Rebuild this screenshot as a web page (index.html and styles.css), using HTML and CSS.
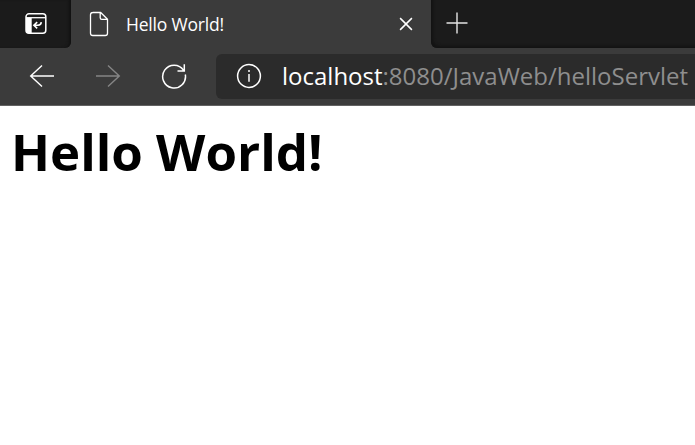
FILE: index.html
```html
<!DOCTYPE html>
<html lang="en">
<head>
<meta charset="utf-8">
<title>Hello World!</title>
<link rel="stylesheet" href="styles.css">
</head>
<body>
<header class="tabs">
  <div class="lead">
    <svg class="panel-icon" width="24" height="24" viewBox="0 0 24 24" fill="none" stroke="#fff" stroke-width="1.5">
      <rect x="2" y="1.8" width="19.8" height="19.5" rx="3"/>
      <path d="M2 5.7H22" stroke-width="1.3"/>
      <path d="M2 6H7.7V21.3H4.5Q2 21.3 2 18Z" fill="#fff" stroke="none"/>
      <path d="M17.3 10.2Q17 13.3 14 13.3H10.2M13.2 10.1L9.9 13.3L13.2 16.4" stroke-width="1.6"/>
    </svg>
  </div>
  <div class="tab">
    <svg width="20" height="26" viewBox="0 0 20 26" fill="none" stroke="#fff" stroke-width="1.3" stroke-linejoin="round">
      <path d="M3.6 1.5H11.7L18.5 8.3V22.2Q18.5 24.5 16.2 24.5H3.8Q1.5 24.5 1.5 22.2V3.8Q1.5 1.5 3.8 1.5M11.2 1.8V6.8Q11.2 8.4 12.8 8.4H18.2"/>
    </svg>
    <span class="tab-title">Hello World!</span>
    <svg class="close" width="14" height="14" viewBox="0 0 14 14" fill="none" stroke="#fff" stroke-width="1.5">
      <path d="M1.1 1.1L12.9 12.9M12.9 1.1L1.1 12.9"/>
    </svg>
  </div>
  <div class="after">
    <svg width="22" height="22" viewBox="0 0 22 22" fill="none" stroke="#e4e4e4" stroke-width="1.4">
      <path d="M11 .5V21.5M.5 11H21.5"/>
    </svg>
  </div>
</header>
<nav class="toolbar">
  <svg class="nav-icon" width="26" height="24" viewBox="0 0 26 24" fill="none" stroke="#fff" stroke-width="1.4">
    <path d="M25 12H1.5M13 1.5L1.7 12L13 22.5"/>
  </svg>
  <svg class="nav-icon" width="26" height="24" viewBox="0 0 26 24" fill="none" stroke="#858585" stroke-width="1.4">
    <path d="M1 12H24.5M13 1.5L24.3 12L13 22.5"/>
  </svg>
  <svg class="nav-icon" width="26" height="26" viewBox="0 0 26 26" fill="none" stroke="#fff" stroke-width="1.5">
    <path d="M24.3 11.5A11.4 11.4 0 1 1 22.6 7.3M23.3 1.2V8H16.5"/>
  </svg>
  <div class="address">
    <svg width="26" height="26" viewBox="0 0 26 26" fill="none" stroke="#fff" stroke-width="1.5">
      <circle cx="13" cy="13" r="11.4"/>
      <path d="M13 11V18.7"/>
      <circle cx="13" cy="8" r="1" fill="#fff" stroke="none"/>
    </svg>
    <span class="url"><span class="host">localhost</span><span class="path">:8080/JavaWeb/helloServlet</span></span>
  </div>
</nav>
<main><h1>Hello World!</h1></main>
</body>
</html>
```
FILE: styles.css
```css
* { box-sizing: border-box; }
body {
  margin: 0;
  background: #fff;
  font-family: "Open Sans", "Noto Sans", sans-serif;
  overflow: hidden;
}
svg { display: block; flex: none; }
.tabs { display: flex; height: 48px; background: #3b3b3b; }
.lead {
  width: 71px;
  padding: 12px 0 0 24px;
  background: #1b1b1b;
  border-bottom-right-radius: 6px;
  box-shadow: inset -3px 0 3px -1px #121212;
}
.tab {
  display: flex;
  align-items: center;
  width: 360px;
  padding: 0 18px;
  background: linear-gradient(#3b3b3b, #3b3b3b);
  box-shadow: -6px -6px 0 -6px #1b1b1b;
}
.tab-title {
  margin-left: 17px;
  color: #fff;
  font-size: 17.5px;
  line-height: 24px;
  letter-spacing: -0.2px;
  white-space: nowrap;
}
.close { margin-left: auto; }
.after {
  flex: 1;
  padding: 12px 0 0 15px;
  background: #1b1b1b;
  border-bottom-left-radius: 6px;
  box-shadow: inset 3px -3px 3px -1px #131313;
}
.toolbar {
  display: flex;
  align-items: center;
  height: 58px;
  padding: 0 0 1px 29px;
  background: #3b3b3b;
  border-bottom: 1px solid #626262;
}
.nav-icon { margin-right: 40px; }
.nav-icon:nth-child(3) { margin-right: 29px; }
.address {
  display: flex;
  align-items: center;
  flex: 1;
  height: 45px;
  padding-left: 20px;
  background: #2b2b2b;
  border-radius: 6px 0 0 6px;
}
.url {
  margin-left: 20px;
  color: #8e8e8e;
  font-size: 24px;
  line-height: 32px;
  white-space: nowrap;
}
.host { color: #fff; }
h1 {
  margin: 0;
  padding: 10px 0 0 11px;
  color: #000;
  font-size: 51px;
  line-height: 70px;
  font-weight: 700;
  white-space: nowrap;
}
```
